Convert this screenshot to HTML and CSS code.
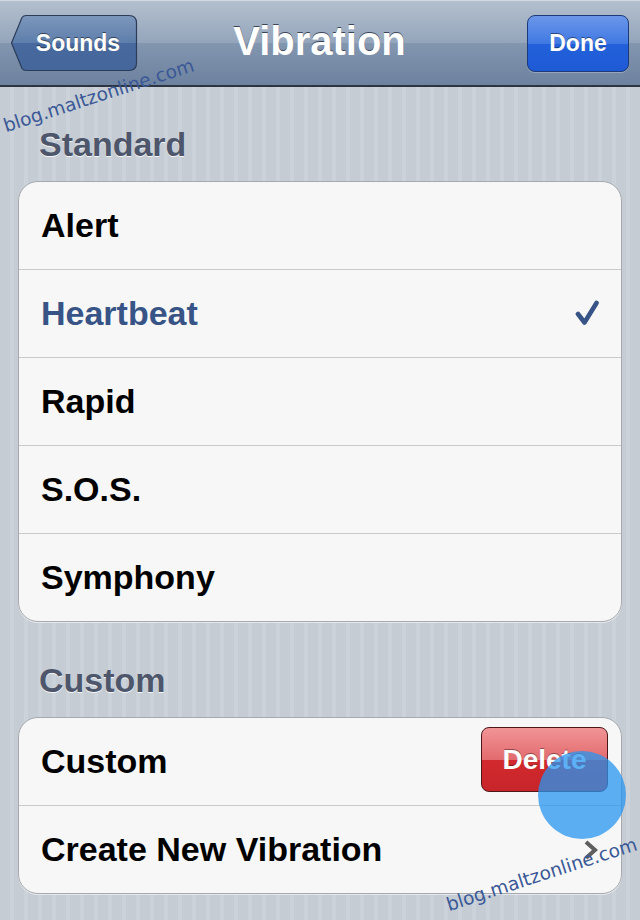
FILE: index.html
```html
<!DOCTYPE html>
<html>
<head>
<meta charset="utf-8">
<link rel="stylesheet" href="styles.css">
</head>
<body>
<header class="navbar">
  <div class="nav-left">
    <a class="back-btn">
      <svg class="back-shape" width="128" height="58" viewBox="0 0 128 58">
        <defs>
          <linearGradient id="bg" x1="0" y1="0" x2="0" y2="1">
            <stop offset="0" stop-color="#7d97bb"/>
            <stop offset="0.5" stop-color="#5d7eab"/>
            <stop offset="0.5" stop-color="#48699d"/>
            <stop offset="1" stop-color="#44669b"/>
          </linearGradient>
        </defs>
        <path d="M16 1.5 H119 Q126.5 1.5 126.5 9 V49 Q126.5 56.5 119 56.5 H16 Q13.5 56.5 12 54.5 L1.5 29 L12 3.5 Q13.5 1.5 16 1.5 Z" fill="url(#bg)" stroke="#2c3c58" stroke-width="1.2"/>
      </svg>
      <span class="back-label">Sounds</span>
    </a>
  </div>
  <h1 class="title">Vibration</h1>
  <div class="nav-right">
    <a class="done-btn">Done</a>
  </div>
</header>

<main class="content">
  <h2 class="section-header">Standard</h2>
  <ul class="group">
    <li class="row"><span class="label">Alert</span></li>
    <li class="row"><span class="label selected">Heartbeat</span>
      <svg class="check" width="26" height="28" viewBox="0 0 26 28">
        <path d="M3 15 L9.5 23.5 L21.5 4" fill="none" stroke="#385487" stroke-width="4.6" stroke-linecap="round" stroke-linejoin="round"/>
      </svg>
    </li>
    <li class="row"><span class="label">Rapid</span></li>
    <li class="row"><span class="label">S.O.S.</span></li>
    <li class="row"><span class="label">Symphony</span></li>
  </ul>

  <h2 class="section-header">Custom</h2>
  <ul class="group">
    <li class="row row-delete"><span class="label">Custom</span><a class="delete-btn">Delete</a></li>
    <li class="row row-chevron"><span class="label">Create New Vibration</span>
      <svg class="chevron" width="16" height="22" viewBox="0 0 16 22">
        <path d="M3 3 L12 11 L3 19" fill="none" stroke="#5e5e5e" stroke-width="4"/>
      </svg>
    </li>
  </ul>
</main>

<div class="touch"></div>
<span class="watermark wm-top">blog.maltzonline.com</span>
<span class="watermark wm-bottom">blog.maltzonline.com</span>
</body>
</html>
```

FILE: styles.css
```css
* { box-sizing: border-box; }

body {
  margin: 0;
  width: 640px;
  height: 920px;
  overflow: hidden;
  position: relative;
  font-family: "Liberation Sans", Arial, Helvetica, sans-serif;
  background: repeating-linear-gradient(90deg, #c5ccd4 0 10px, #cbd2d9 10px 14px);
}

.navbar {
  height: 87px;
  border-top: 1px solid #d3d9e1;
  border-bottom: 2px solid #2d3542;
  background: linear-gradient(#b3bfce 0%, #94a5bb 50%, #8396b0 50%, #6d829f 100%);
  display: grid;
  grid-template-columns: 1fr auto 1fr;
  align-items: center;
  padding: 0 11px 0 10px;
}

.nav-left { display: flex; justify-content: flex-start; }
.nav-right { display: flex; justify-content: flex-end; }

.back-btn {
  display: grid;
  width: 128px;
  height: 58px;
}
.back-shape, .back-label { grid-area: 1 / 1; }
.back-label {
  align-self: center;
  justify-self: center;
  margin-left: 8px;
  color: #fff;
  font-weight: bold;
  font-size: 23px;
  text-shadow: 0 -1px 0 rgba(0, 0, 0, 0.5);
}

.title {
  margin: 0;
  padding-bottom: 3px;
  color: #fff;
  font-size: 40px;
  font-weight: bold;
  text-shadow: 0 -1px 0 #3b4558;
}

.done-btn {
  width: 102px;
  height: 57px;
  display: flex;
  align-items: center;
  justify-content: center;
  border: 1px solid #1d3a78;
  border-radius: 8px;
  background: linear-gradient(#6b96e9 0%, #4079e3 50%, #2261db 50%, #1f5ad5 100%);
  color: #fff;
  font-weight: bold;
  font-size: 23px;
  text-shadow: 0 -1px 0 rgba(0, 0, 0, 0.45);
  box-shadow: 0 1px 0 rgba(255, 255, 255, 0.25);
}

.content {
  padding: 37px 18px 0;
}

.section-header {
  margin: 0 0 17px;
  padding-left: 21px;
  height: 40px;
  line-height: 40px;
  font-size: 34px;
  font-weight: bold;
  color: #4d566b;
  text-shadow: 0 1px 0 #f4f6f8;
}

.group {
  list-style: none;
  margin: 0 0 38px;
  padding: 0;
  background: #f7f7f7;
  border: 1px solid #a6a9ae;
  border-radius: 20px;
  box-shadow: 0 1px 0 #e4e8ec;
  overflow: hidden;
}

.row {
  height: 88px;
  border-top: 1px solid #c9c9c9;
  display: flex;
  align-items: center;
  justify-content: space-between;
  padding: 0 20px 0 22px;
}
.row:first-child {
  height: 87px;
  border-top: none;
}

.label {
  font-size: 34px;
  font-weight: bold;
  color: #000;
}
.label.selected { color: #385487; }

.check { margin-top: -2px; margin-right: 0; }

.row-delete { padding-right: 13px; }
.delete-btn {
  width: 127px;
  height: 65px;
  margin-top: -4px;
  display: flex;
  align-items: center;
  justify-content: center;
  border: 1px solid #4d1717;
  border-radius: 8px;
  background: linear-gradient(#f19496 0%, #e26b6e 50%, #d2292e 50%, #c7252a 100%);
  color: #fff;
  font-weight: bold;
  font-size: 28px;
  text-shadow: 0 -1px 0 rgba(0, 0, 0, 0.4);
}

.row-chevron { padding-right: 22px; }
.chevron { margin-top: 0; }

.touch {
  position: absolute;
  left: 538px;
  top: 751px;
  width: 88px;
  height: 88px;
  border-radius: 50%;
  background: rgba(40, 150, 240, 0.75);
}

.watermark {
  position: absolute;
  font-family: "DejaVu Sans", sans-serif;
  font-size: 18.5px;
  line-height: 18.5px;
  color: #3a5896;
  white-space: nowrap;
  transform-origin: 0 100%;
  transform: rotate(-18deg);
}
.wm-top { left: 7px; top: 117px; }
.wm-bottom { left: 450px; top: 896px; }
```
